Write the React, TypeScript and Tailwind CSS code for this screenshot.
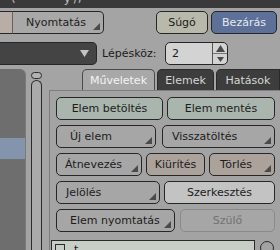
import React from "react";

const Tri = ({ c = "#4a4a4a" }: { c?: string }) => (
  <svg className="absolute right-[3px] bottom-[3px]" width="7" height="7" viewBox="0 0 7 7">
    <polygon points="7,0 7,7 0,7" fill={c} />
  </svg>
);

type BtnProps = {
  label: string;
  w: string;
  bg?: string;
  menu?: boolean;
  disabled?: boolean;
  pad?: string;
};

const Btn = ({ label, w, bg = "bg-[#a6a6a6]", menu, disabled, pad }: BtnProps) => (
  <div
    className={`relative h-[23px] ${w} ${bg} rounded-[5px] border ${
      disabled ? "border-[#8a8a8a] text-[#727272]" : "border-[#262626] text-[#1c1c1c]"
    } flex items-center ${pad ? `justify-start ${pad}` : "justify-center"} shrink-0`}
  >
    <span>{label}</span>
    {menu && <Tri />}
  </div>
);

export default function App() {
  return (
    <div
      className="w-[280px] h-[250px] overflow-hidden bg-[#a4a4a4] text-[11px] leading-none text-[#1c1c1c]"
      style={{ fontFamily: '"DejaVu Sans", sans-serif' }}
    >
      {/* top strip */}
      <div className="h-[8px] bg-[#3a3a3a] overflow-hidden text-[#bdbdbd] text-[12px] leading-none">
        <div className="flex -mt-[8px]">
          <span className="ml-[11px]">(</span>
          <span className="ml-[48px]">y</span>
          <span className="ml-[3px]">/,</span>
        </div>
      </div>

      {/* row 1 */}
      <div className="flex mt-[3px] h-[23px]">
        <div className="w-[13px] h-full bg-[#b9aea7] border-y border-[#262626] border-r border-r-[#6d6058]" />
        <div className="relative w-[91px] h-full bg-[#a8a8a8] border-y border-r border-[#262626] rounded-r-[5px] flex items-center justify-center">
          <span className="pr-[4px]">Nyomtatás</span>
          <Tri />
        </div>
        <div className="ml-[52px] w-[52px] h-full bg-[#b8b9ab] border border-[#262626] rounded-[5px] flex items-center justify-center">
          Súgó
        </div>
        <div className="ml-[3px] w-[66px] h-full bg-[#5c7098] border border-[#262626] rounded-[5px] flex items-center justify-center text-[#e6e9f0]">
          Bezárás
        </div>
      </div>

      {/* row 2 */}
      <div className="flex items-center mt-[8px] h-[23px]">
        <div className="relative w-[97px] h-full bg-[#444444] border-y border-r border-[#262626] rounded-r-[5px]">
          <svg className="absolute left-[80px] top-[7px]" width="9" height="7" viewBox="0 0 9 7">
            <polygon points="0,0 9,0 4.5,7" fill="#c4c4c4" />
          </svg>
        </div>
        <span className="ml-[5px] w-[63px] shrink-0">Lépésköz:</span>
        <div className="w-[63px] h-full bg-[#d3d3d3] border border-[#262626] rounded-[5px] flex">
          <div className="flex-1 flex items-center pl-[6px]">2</div>
          <div className="w-[15px] border-l border-[#555] flex flex-col">
            <div className="flex-1 flex items-center justify-center border-b border-[#777]">
              <svg width="9" height="7" viewBox="0 0 9 7">
                <polygon points="0,7 9,7 4.5,0" fill="#4a4a4a" />
              </svg>
            </div>
            <div className="flex-1 flex items-center justify-center">
              <svg width="7" height="5" viewBox="0 0 7 5">
                <polygon points="0,0 7,0 3.5,5" fill="#4a4a4a" />
              </svg>
            </div>
          </div>
        </div>
      </div>

      {/* main */}
      <div className="flex mt-[4px] h-[181px]">
        {/* left list */}
        <div className="w-[27px] h-full bg-[#6e6e6e] rounded-tr-[6px] border-r border-[#7a7a7a] pt-[69px]">
          <div className="h-[21px] bg-[#8494ac]" />
        </div>

        {/* scrollbar */}
        <div className="ml-[5px] w-[12px] flex flex-col pt-[3px]">
          <div className="h-[7px] rounded-full border border-[#2a2a2a] bg-[#b2b2b2]" />
          <div className="mt-[1px] flex-1 rounded-t-[6px] border-x border-t border-[#2a2a2a] bg-[#aaaaaa]" />
        </div>

        {/* tabs */}
        <div className="ml-[7px] flex-1 flex flex-col">
          <div className="flex h-[23px] items-end pl-[33px]">
            <div className="w-[73px] h-[21px] bg-[#a8a8a8] border-x border-t border-[#4a4a4a] rounded-t-[5px] flex items-center justify-center text-[#f4f4f4]">
              Műveletek
            </div>
            <div className="ml-[2px] w-[57px] h-[21px] bg-[#3d3d3d] border-x border-t border-[#2a2a2a] rounded-t-[5px] flex items-center justify-center text-[#d6d6d6]">
              Elemek
            </div>
            <div className="ml-[2px] w-[64px] h-[21px] bg-[#3d3d3d] border-x border-t border-[#2a2a2a] rounded-tl-[5px] flex items-center justify-center text-[#d6d6d6] shrink-0">
              Hatások
            </div>
          </div>
          <div className="flex-1 bg-[#a3a3a3] border-t border-l border-[#7e7e7e] pl-[6px] pt-[6px] flex flex-col gap-[5px]">
            <div className="flex gap-[4px]">
              <Btn label="Elem betöltés" w="w-[107px]" bg="bg-[#a9b5ad]" />
              <Btn label="Elem mentés" w="w-[108px]" bg="bg-[#a9b5ad]" />
            </div>
            <div className="flex gap-[6px]">
              <Btn label="Új elem" w="w-[100px]" menu pad="pl-[13px]" />
              <Btn label="Visszatöltés" w="w-[113px]" menu pad="pl-[9px]" />
            </div>
            <div className="flex gap-[4px]">
              <Btn label="Átnevezés" w="w-[86px]" menu pad="pl-[8px]" />
              <Btn label="Kiürítés" w="w-[59px]" bg="bg-[#aca29c]" />
              <Btn label="Törlés" w="w-[66px]" bg="bg-[#aca29c]" menu pad="pl-[10px]" />
            </div>
            <div className="flex gap-[4px]">
              <Btn label="Jelölés" w="w-[104px]" menu pad="pl-[9px]" />
              <Btn label="Szerkesztés" w="w-[111px]" bg="bg-[#c3c3c3]" />
            </div>
            <div className="flex gap-[5px]">
              <Btn label="Elem nyomtatás" w="w-[119px]" menu pad="pl-[13px]" />
              <Btn label="Szülő" w="w-[95px]" disabled />
            </div>
            <div className="flex mt-[3px]">
              <div className="ml-[-5px] w-[204px] h-[20px] bg-[#c6cec6] border border-[#2a2a2a] flex items-start pt-[3px] pl-[3px] gap-[9px]">
                <div className="w-[10px] h-[10px] border border-[#2a2a2a]" />
                <span>t</span>
              </div>
              <div className="ml-[5px] mt-[1px] w-[14px] h-[14px] rounded-full border border-[#2a2a2a]" />
            </div>
          </div>
        </div>
      </div>
    </div>
  );
}
